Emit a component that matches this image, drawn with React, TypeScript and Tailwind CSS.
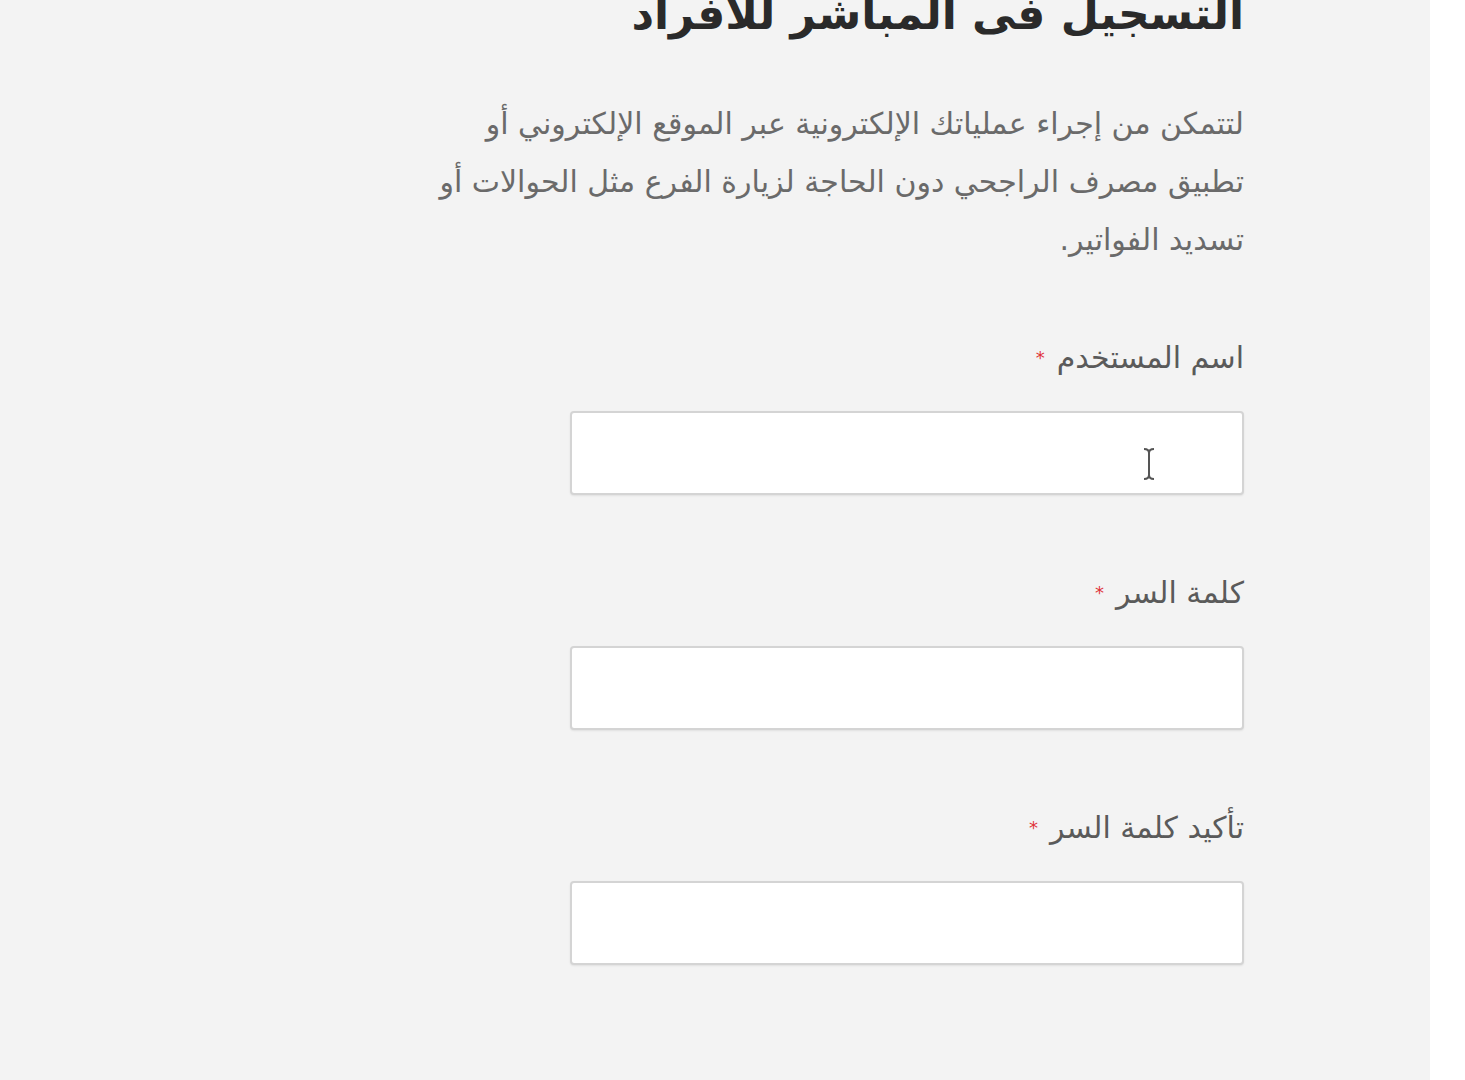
import React from "react";

const font = { fontFamily: '"DejaVu Sans", "Noto Sans", sans-serif' };

function Field({ label, cursor }: { label: string; cursor?: boolean }) {
  return (
    <div className="flex flex-col items-start">
      <label className="text-[30px] leading-[40px] text-[#5a5a5a] flex items-center gap-[12px]">
        <span>{label}</span>
        <span className="text-[#e0343a] text-[18px] leading-none">*</span>
      </label>
      <div className="relative mt-[33px] w-[674px] h-[84px] bg-white border-2 border-[#d4d4d4] rounded-[4px] shadow-[0_1px_2px_rgba(0,0,0,0.08)]">
        {cursor && (
          <svg className="absolute right-[86px] top-[34px]" width="14" height="34" viewBox="0 0 14 34">
            <path d="M2 2 Q7 2 7 6 Q7 2 12 2 M7 6 V28 M2 32 Q7 32 7 28 Q7 32 12 32" stroke="#555" strokeWidth="2" fill="none" />
          </svg>
        )}
      </div>
    </div>
  );
}

export default function App() {
  return (
    <div style={font} className="w-[1465px] h-[1080px] flex overflow-hidden bg-white">
      <div dir="rtl" className="w-[1430px] h-full bg-[#f3f3f3] pr-[186px]">
        <div className="w-[674px] flex flex-col items-start">
          <h1 className="mt-[-16px] text-[44px] leading-[60px] font-bold text-[#2a2a2a] whitespace-nowrap">التسجيل فى المباشر للأفراد</h1>
          <p className="mt-[51px] w-[820px] text-[30px] leading-[58px] text-[#6a6a6a] whitespace-nowrap">
            لتتمكن من إجراء عملياتك الإلكترونية عبر الموقع الإلكتروني أو
            <br />
            تطبيق مصرف الراجحي دون الحاجة لزيارة الفرع مثل الحوالات أو
            <br />
            تسديد الفواتير.
          </p>
          <div className="mt-[69px] flex flex-col gap-[78px]">
            <Field label="اسم المستخدم" cursor />
            <Field label="كلمة السر" />
            <Field label="تأكيد كلمة السر" />
          </div>
        </div>
      </div>
      <div className="flex-1 bg-white" />
    </div>
  );
}
